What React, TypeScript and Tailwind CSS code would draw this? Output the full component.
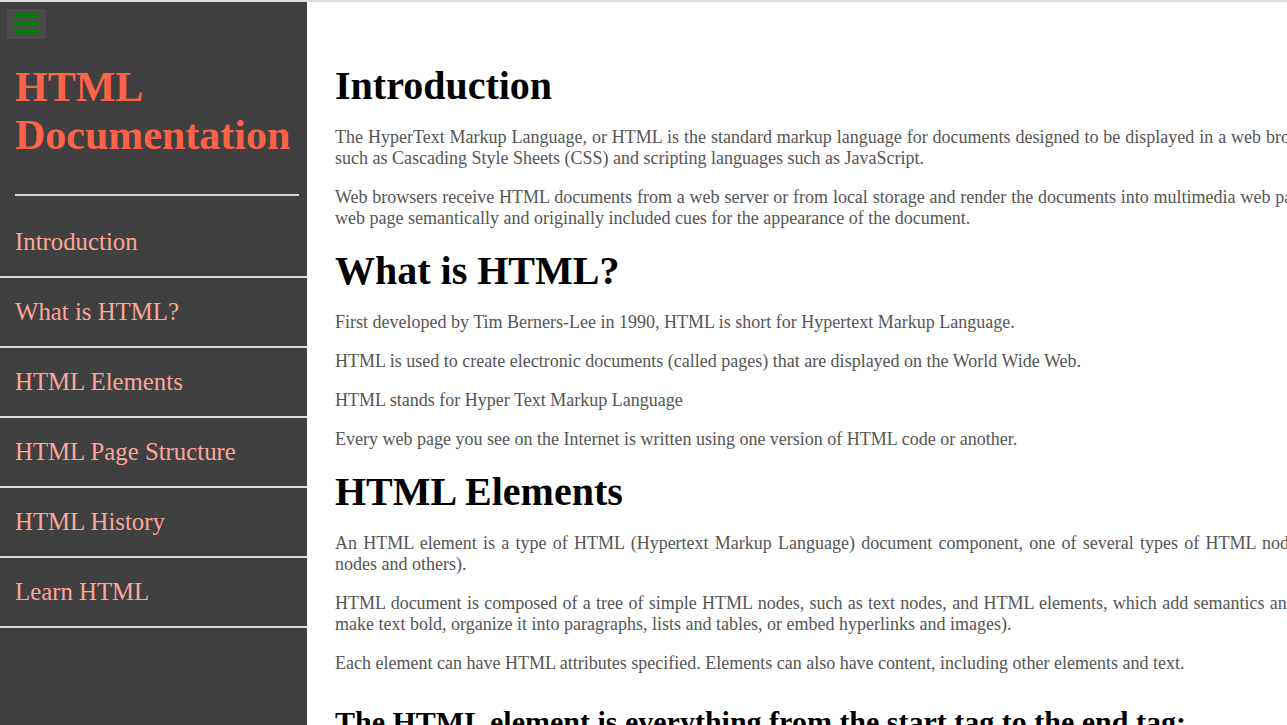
const navItems = [
  "Introduction",
  "What is HTML?",
  "HTML Elements",
  "HTML Page Structure",
  "HTML History",
  "Learn HTML",
];

function MenuButton() {
  return (
    <button className="ml-[7px] mt-[7px] flex h-[30px] w-[39px] flex-col items-center justify-center gap-[4px] bg-[#4b4b4b]">
      <span className="block h-[4px] w-[25px] rounded-full bg-[#008000]" />
      <span className="block h-[4px] w-[25px] rounded-full bg-[#008000]" />
      <span className="block h-[4px] w-[25px] rounded-full bg-[#008000]" />
    </button>
  );
}

function Sidebar() {
  return (
    <aside className="flex h-full w-[307px] shrink-0 flex-col bg-[#404040]">
      <MenuButton />
      <h1 className="mt-[24px] pl-[15px] pr-[6px] text-[42px] font-bold leading-[48px] text-[#ff6347]">
        HTML Documentation
      </h1>
      <hr className="ml-[15px] mr-[8px] mt-[35px] border-0 border-t-2 border-[#d4d4d4]" />
      <nav className="mt-[12px] flex flex-col">
        {navItems.map((item) => (
          <a
            key={item}
            href="#"
            className="flex h-[70px] items-center border-b-2 border-[#dcdcdc] px-[15px] text-[24.8px] text-[#ffa69a]"
          >
            {item}
          </a>
        ))}
      </nav>
    </aside>
  );
}

function Main() {
  return (
    <main className="w-[1268px] shrink-0 pl-[28px] pt-[60px] text-justify text-[18px] leading-[21px] text-[#555]">
      <h1 className="text-left text-[40px] font-bold leading-[47px] text-black">Introduction</h1>
      <p className="my-[18px]">
        The HyperText Markup Language, or HTML is the standard markup language for documents designed to be displayed in a
        web browser. It can be assisted by technologies such as Cascading Style Sheets (CSS) and scripting languages such as
        JavaScript.
      </p>
      <p className="my-[18px]">
        Web browsers receive HTML documents from a web server or from local storage and render the documents into multimedia
        web pages. HTML describes the structure of a web page semantically and originally included cues for the appearance of
        the document.
      </p>

      <h1 className="text-left text-[40px] font-bold leading-[47px] text-black">What is HTML?</h1>
      <p className="my-[18px]">First developed by Tim Berners-Lee in 1990, HTML is short for Hypertext Markup Language.</p>
      <p className="my-[18px]">HTML is used to create electronic documents (called pages) that are displayed on the World Wide Web.</p>
      <p className="my-[18px]">HTML stands for Hyper Text Markup Language</p>
      <p className="my-[18px]">Every web page you see on the Internet is written using one version of HTML code or another.</p>

      <h1 className="text-left text-[40px] font-bold leading-[47px] text-black">HTML Elements</h1>
      <p className="my-[18px]">
        An HTML element is a type of HTML (Hypertext Markup Language) document component, one of several types of HTML nodes
        (there are also text nodes, comment nodes and others).
      </p>
      <p className="my-[18px]">
        HTML document is composed of a tree of simple HTML nodes, such as text nodes, and HTML elements, which add semantics
        and formatting to parts of document (e.g., make text bold, organize it into paragraphs, lists and tables, or embed
        hyperlinks and images).
      </p>
      <p className="my-[18px]">
        Each element can have HTML attributes specified. Elements can also have content, including other elements and text.
      </p>
      <h2 className="mt-[30px] text-left text-[30px] font-bold leading-[35px] text-black">
        The HTML element is everything from the start tag to the end tag:
      </h2>
    </main>
  );
}

export default function App() {
  return (
    <div
      className="flex h-[725px] w-[1287px] overflow-hidden border-t-2 border-[#dcdcdc] bg-white"
      style={{ fontFamily: '"Liberation Serif", "Times New Roman", serif' }}
    >
      <Sidebar />
      <Main />
    </div>
  );
}
